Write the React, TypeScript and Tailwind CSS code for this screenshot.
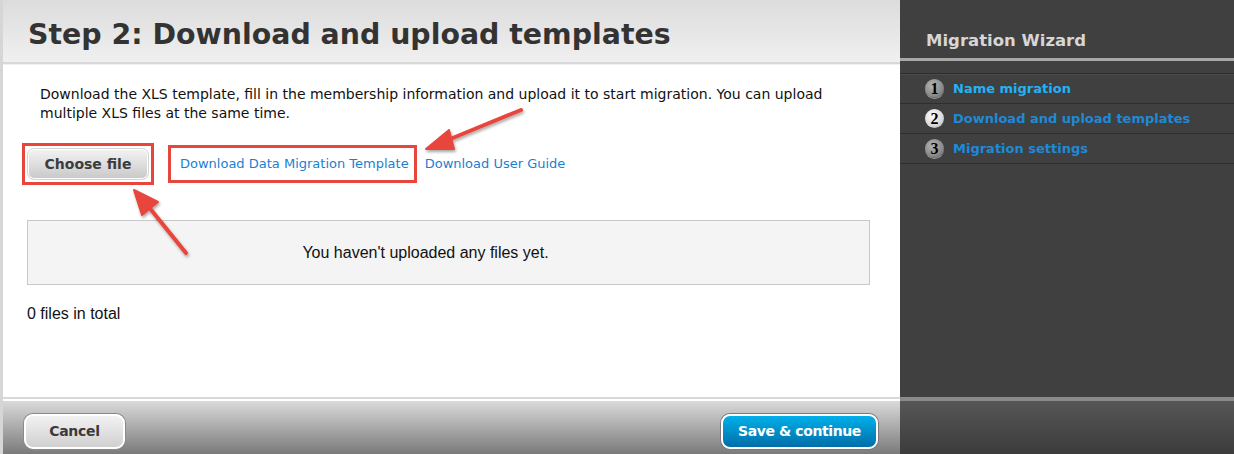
import React from "react";

const steps = [
  { n: 1, label: "Name migration", active: false, done: true },
  { n: 2, label: "Download and upload templates", active: true, done: false },
  { n: 3, label: "Migration settings", active: false, done: false },
];

function StepBadge({ n, active }: { n: number; active: boolean }) {
  return (
    <span
      className={
        "flex h-[19px] w-[19px] shrink-0 items-center justify-center rounded-full font-['Liberation_Serif',serif] text-[16px] font-bold leading-none text-black " +
        (active
          ? "bg-[radial-gradient(circle_at_40%_35%,#ffffff,#d8d8d8_60%,#a0a0a0)]"
          : "bg-[radial-gradient(circle_at_40%_35%,#b4b4b4,#8a8a8a_60%,#5c5c5c)] shadow-[0_1px_0_#9a9a9a]")
      }
    >
      {n}
    </span>
  );
}

function Arrows() {
  return (
    <svg className="pointer-events-none absolute left-0 top-0" width="900" height="400" viewBox="0 0 900 400">
      <defs>
        <filter id="sh" x="-20%" y="-20%" width="140%" height="140%">
          <feDropShadow dx="1" dy="2" stdDeviation="1.5" floodColor="#000" floodOpacity="0.35" />
        </filter>
      </defs>
      <g filter="url(#sh)" fill="#e8453c" stroke="#e8453c" strokeLinecap="round">
        <line x1="518" y1="110" x2="440" y2="142" strokeWidth="4" />
        <polygon points="423,149 446,130 451,149" strokeWidth="2" strokeLinejoin="round" />
        <line x1="183" y1="253" x2="145" y2="206" strokeWidth="4" />
        <polygon points="131,190 155,202 139,215" strokeWidth="2" strokeLinejoin="round" />
      </g>
    </svg>
  );
}

export default function App() {
  return (
    <div className="flex h-[454px] w-[1234px] overflow-hidden bg-white font-['DejaVu_Sans',Verdana,sans-serif]">
      {/* Main panel */}
      <div className="relative flex w-[900px] flex-col border-l-[3px] border-[#d6d6d6]">
        <div className="h-[64px] border-b-2 border-[#d8d8d8] bg-[linear-gradient(#dcdcdc,#f0f0f0)] pl-[25px] pt-[16px]">
          <h1 className="text-[28.4px] font-bold leading-[38px] text-[#333333]">Step 2: Download and upload templates</h1>
        </div>
        <div className="h-px bg-[#f2f2f2]" />
        <div className="flex-1 pl-[24px] pr-[28px]">
          <p className="mt-[20px] max-w-[800px] pl-[13px] text-[14px] leading-[19px] text-[#111111]">
            Download the XLS template, fill in the membership information and upload it to start migration. You can upload multiple XLS files at the same time.
          </p>
          <div className="mt-[20px] flex items-center">
            <div className="-ml-[5px] border-[3px] border-[#e8453c] p-[2px]">
              <button className="h-[32px] w-[122px] rounded-[7px] border border-[#d4d4d4] bg-[linear-gradient(#f4f4f4,#c8c8c8)] text-[14px] font-bold text-[#3c3c3c] shadow-[inset_0_0_0_1px_#ffffff]">
                Choose file
              </button>
            </div>
            <div className="ml-[14px] flex h-[38px] items-center border-[3px] border-[#e8453c] pl-[9px] pr-[5px]">
              <a className="text-[13px] text-[#1a7fd0]">Download Data Migration Template</a>
            </div>
            <a className="ml-[8px] text-[13px] text-[#1a7fd0]">Download User Guide</a>
          </div>
          <div className="mt-[35px] flex h-[65px] w-[843px] items-center justify-center border border-[#c8c8c8] bg-[#f4f4f4] pr-[46px] font-['Liberation_Sans_Narrow','Liberation_Sans',sans-serif] text-[16px] text-[#111111]">
            You haven't uploaded any files yet.
          </div>
          <p className="mt-[17px] font-['Liberation_Sans_Narrow','Liberation_Sans',sans-serif] text-[16px] text-[#111111]">0 files in total</p>
        </div>
        <div className="h-[2px] bg-[#d8d8d8]" />
        <div className="h-[2px] bg-white" />
        <div className="flex h-[53px] items-start justify-between bg-[linear-gradient(#dadada,#7a7a7a)] pl-[21px] pr-[22px] pt-[13px]">
          <button className="h-[35px] w-[101px] rounded-[9px] border-2 border-white bg-[linear-gradient(#f2f2f2,#d0d0d0)] text-[14px] font-bold tracking-[-0.3px] text-[#3a3a3a] shadow-[0_0_0_1px_#8a8a8a]">
            Cancel
          </button>
          <button className="h-[35px] w-[157px] rounded-[9px] border-2 border-white bg-[linear-gradient(#00b0ea,#006ea8)] text-[14px] font-bold tracking-[-0.4px] text-white shadow-[0_0_0_1px_#7a7a7a]">
            Save &amp; continue
          </button>
        </div>
        <Arrows />
      </div>

      {/* Sidebar */}
      <div className="flex w-[334px] flex-col bg-[#404040]">
        <div className="flex-1">
          <h2 className="pl-[26px] pt-[28px] text-[16.5px] font-bold leading-[26px] text-[#d6d6d6]">Migration Wizard</h2>
          <div className="mt-[4px] h-[3px] bg-[#a8a8a8]" />
          <div className="mt-[12px] border-t border-[#2e2e2e] shadow-[inset_0_1px_0_#4a4a4a]">
            {steps.map((s) => (
              <div key={s.n} className="flex h-[30px] items-center gap-[9px] border-b border-[#2e2e2e] pl-[25px]">
                <StepBadge n={s.n} active={s.active} />
                <span className={"text-[13px] font-bold " + (s.done ? "text-[#22b2f8]" : "text-[#1d8ad8]")}>{s.label}</span>
              </div>
            ))}
          </div>
        </div>
        <div className="h-[4px] bg-[#8a8a8a]" />
        <div className="h-[53px] bg-[linear-gradient(#565656,#3c3c3c)]" />
      </div>
    </div>
  );
}
